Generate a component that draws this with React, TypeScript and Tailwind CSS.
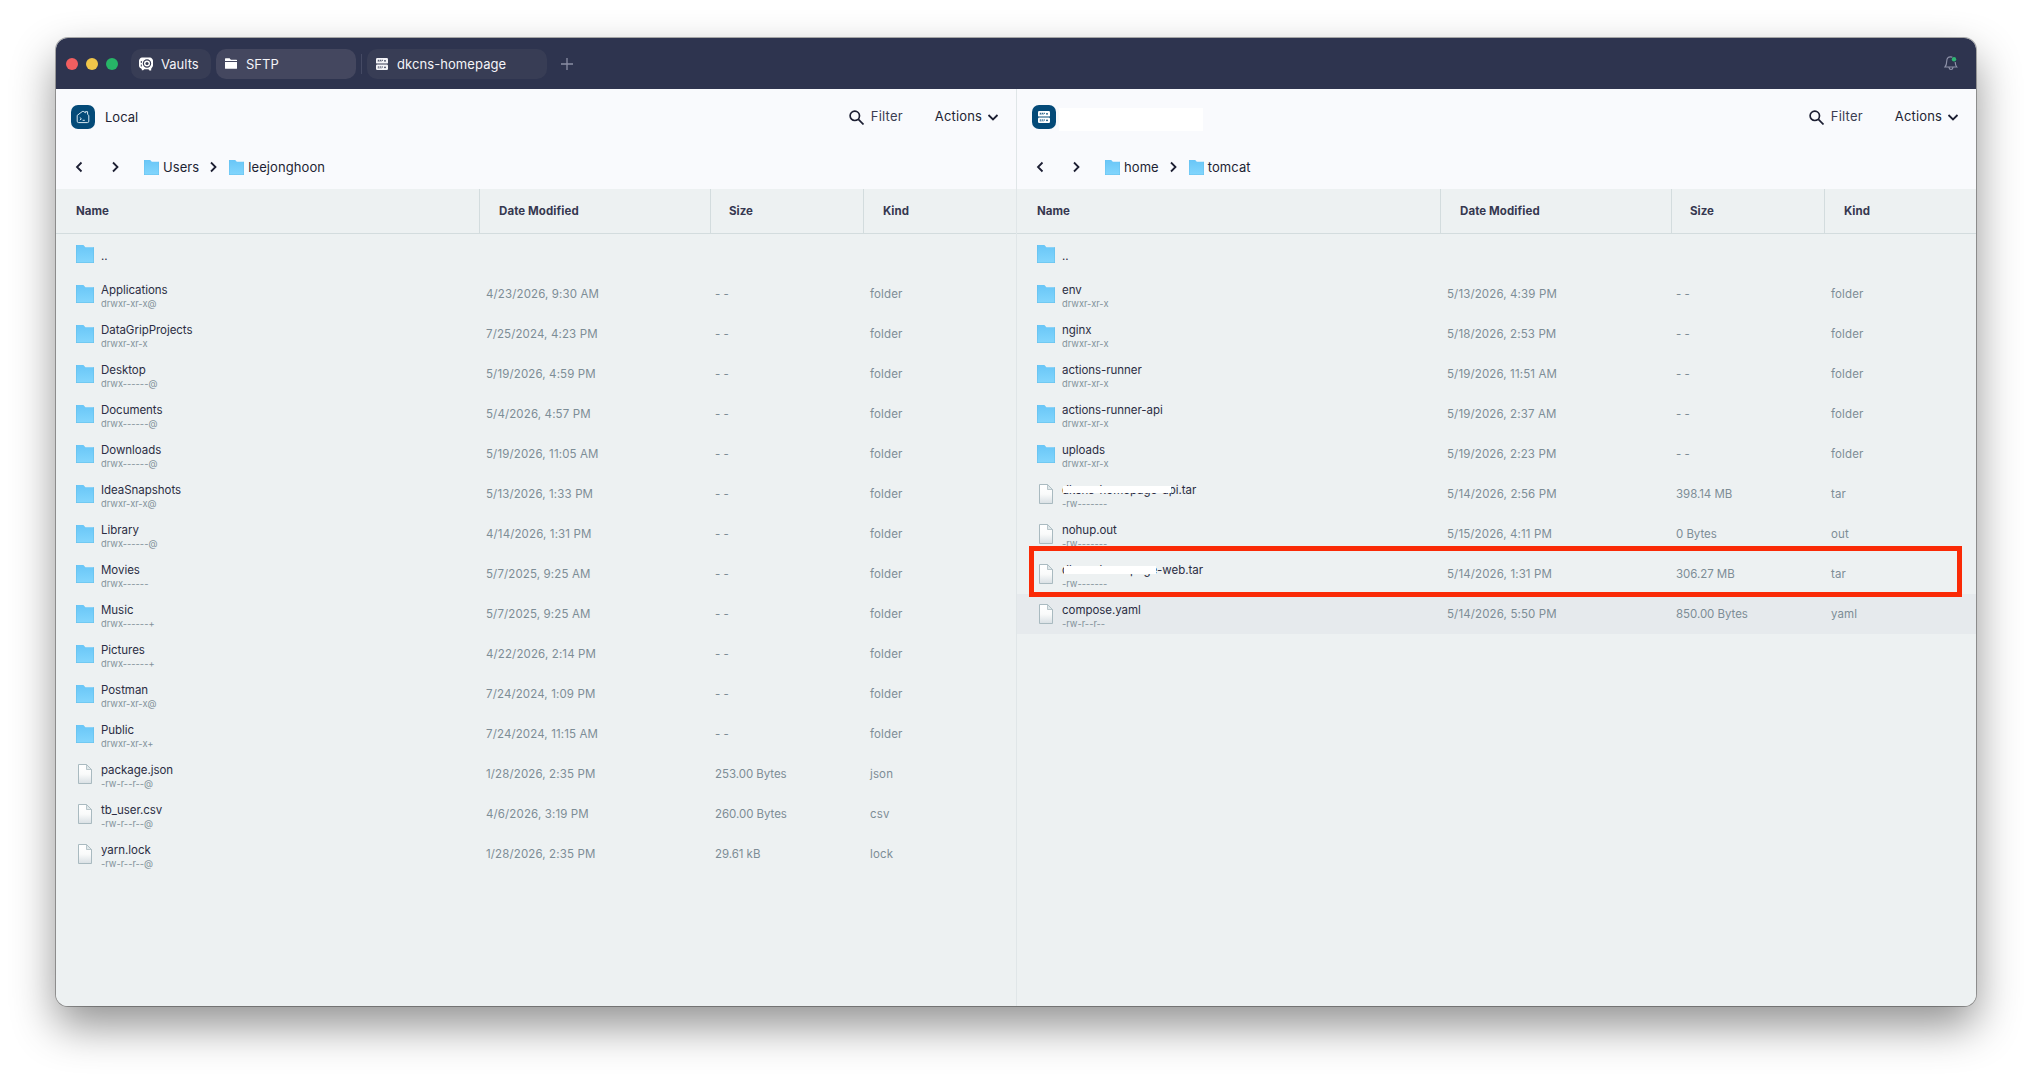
import { ReactNode } from 'react'
import clsx from 'clsx'

interface FileEntry {
  name: string
  perms?: string
  date?: string
  size?: string
  kind?: string
  selected?: boolean
  mask?: 'api' | 'web'
}

const localFiles: FileEntry[] = [
  { name: '..' },
  { name: 'Applications', perms: 'drwxr-xr-x@', date: '4/23/2026, 9:30 AM', size: '- -', kind: 'folder' },
  { name: 'DataGripProjects', perms: 'drwxr-xr-x', date: '7/25/2024, 4:23 PM', size: '- -', kind: 'folder' },
  { name: 'Desktop', perms: 'drwx------@', date: '5/19/2026, 4:59 PM', size: '- -', kind: 'folder' },
  { name: 'Documents', perms: 'drwx------@', date: '5/4/2026, 4:57 PM', size: '- -', kind: 'folder' },
  { name: 'Downloads', perms: 'drwx------@', date: '5/19/2026, 11:05 AM', size: '- -', kind: 'folder' },
  { name: 'IdeaSnapshots', perms: 'drwxr-xr-x@', date: '5/13/2026, 1:33 PM', size: '- -', kind: 'folder' },
  { name: 'Library', perms: 'drwx------@', date: '4/14/2026, 1:31 PM', size: '- -', kind: 'folder' },
  { name: 'Movies', perms: 'drwx------', date: '5/7/2025, 9:25 AM', size: '- -', kind: 'folder' },
  { name: 'Music', perms: 'drwx------+', date: '5/7/2025, 9:25 AM', size: '- -', kind: 'folder' },
  { name: 'Pictures', perms: 'drwx------+', date: '4/22/2026, 2:14 PM', size: '- -', kind: 'folder' },
  { name: 'Postman', perms: 'drwxr-xr-x@', date: '7/24/2024, 1:09 PM', size: '- -', kind: 'folder' },
  { name: 'Public', perms: 'drwxr-xr-x+', date: '7/24/2024, 11:15 AM', size: '- -', kind: 'folder' },
  { name: 'package.json', perms: '-rw-r--r--@', date: '1/28/2026, 2:35 PM', size: '253.00 Bytes', kind: 'json' },
  { name: 'tb_user.csv', perms: '-rw-r--r--@', date: '4/6/2026, 3:19 PM', size: '260.00 Bytes', kind: 'csv' },
  { name: 'yarn.lock', perms: '-rw-r--r--@', date: '1/28/2026, 2:35 PM', size: '29.61 kB', kind: 'lock' },
]

const remoteFiles: FileEntry[] = [
  { name: '..' },
  { name: 'env', perms: 'drwxr-xr-x', date: '5/13/2026, 4:39 PM', size: '- -', kind: 'folder' },
  { name: 'nginx', perms: 'drwxr-xr-x', date: '5/18/2026, 2:53 PM', size: '- -', kind: 'folder' },
  { name: 'actions-runner', perms: 'drwxr-xr-x', date: '5/19/2026, 11:51 AM', size: '- -', kind: 'folder' },
  { name: 'actions-runner-api', perms: 'drwxr-xr-x', date: '5/19/2026, 2:37 AM', size: '- -', kind: 'folder' },
  { name: 'uploads', perms: 'drwxr-xr-x', date: '5/19/2026, 2:23 PM', size: '- -', kind: 'folder' },
  { name: 'dkcns-homepage-api.tar', perms: '-rw-------', date: '5/14/2026, 2:56 PM', size: '398.14 MB', kind: 'tar', mask: 'api' },
  { name: 'nohup.out', perms: '-rw-------', date: '5/15/2026, 4:11 PM', size: '0 Bytes', kind: 'out' },
  { name: 'dkcns-homepage-web.tar', perms: '-rw-------', date: '5/14/2026, 1:31 PM', size: '306.27 MB', kind: 'tar', mask: 'web' },
  { name: 'compose.yaml', perms: '-rw-r--r--', date: '5/14/2026, 5:50 PM', size: '850.00 Bytes', kind: 'yaml', selected: true },
]

function FolderIcon({ className }: { className: string }) {
  return (
    <svg viewBox="0 0 18 18" className={clsx('shrink-0', className)}>
      <defs>
        <linearGradient id="folder" x1="0" y1="0" x2="0" y2="1">
          <stop offset="0" stopColor="#69c6f7" />
          <stop offset="1" stopColor="#83d6fd" />
        </linearGradient>
      </defs>
      <path d="M0 0h7.4l2 2.2H18V18H0z" fill="url(#folder)" />
      <path d="M0 17.6h18M.3 0v18M17.7 2.2V18" stroke="#62bdea" strokeWidth=".6" />
    </svg>
  )
}

function FileIcon() {
  return (
    <svg viewBox="0 0 18 20" className="w-[18px] h-5 shrink-0">
      <defs>
        <linearGradient id="file" x1="0" y1="0" x2="0" y2="1">
          <stop offset="0" stopColor="#ffffff" />
          <stop offset=".5" stopColor="#fafbfb" />
          <stop offset="1" stopColor="#d9e0e4" />
        </linearGradient>
      </defs>
      <path d="M2.5.5h8l5 5v14h-13z" fill="url(#file)" stroke="#a9bac0" />
      <path d="M10.5.5v5h5z" fill="#dfe8ea" stroke="#a9bac0" strokeWidth=".8" />
    </svg>
  )
}

function ServerIcon({ className, hole }: { className: string; hole: string }) {
  return (
    <svg viewBox="0 0 12 12" className={className}>
      <rect width="12" height="5.6" rx="1.2" fill="currentColor" />
      <rect y="6.4" width="12" height="5.6" rx="1.2" fill="currentColor" />
      <path d="M1.8 2.3h5.4M1.8 9h5.4" stroke={hole} strokeWidth="1" strokeDasharray="1.3 .6" />
      <path d="M1.8 3.4h4M1.8 10.1h4" stroke={hole} strokeWidth=".8" strokeDasharray=".8 1" />
      <circle cx="9" cy="2.8" r=".9" fill={hole} />
      <circle cx="9" cy="9.3" r=".9" fill={hole} />
    </svg>
  )
}

function VaultIcon() {
  return (
    <svg viewBox="0 0 14 14" className="w-3.5 h-3.5" fill="none">
      <path
        d="M3 .4h8q1.200 0 1.900 1l.6.9q.5.7.5 1.500v4.400q0 1-.6 1.900l-1.200 1.600v1.800h-1.800l-.9-1.200H5.200l-1 .9H2.800v-1.300L.9 10.700Q0 9.900 0 8.800V4q0-.9.5-1.700l.7-1Q1.800.4 3 .4z"
        fill="#fff"
      />
      <circle cx="8" cy="6.5" r="3.6" stroke="#383d55" strokeWidth="1.2" />
      <circle cx="8" cy="6.5" r="1.6" fill="#383d55" />
      <path d="M2.300 4v2M2.300 7.500v2" stroke="#383d55" />
    </svg>
  )
}

function HouseIcon() {
  return (
    <svg viewBox="0 0 14 14" className="w-3.5 h-3.5" fill="none" stroke="#d8e8f2" strokeWidth="1">
      <path d="M1.2 5.4 6.2 1.600q.8-.6 1.600 0l1.600 1.200V1.700h2.200v2.700l1.200 1V11.200q0 1.400-1.400 1.400H2.600q-1.400 0-1.400-1.400z" />
      <path d="m3.8 7.5 1.6 1.3-1.6 1.3M6.6 10.3h2.2" />
    </svg>
  )
}

function Chevron({ d, className }: { d: string; className?: string }) {
  return (
    <svg viewBox="0 0 12 12" className={clsx('w-3 h-3 shrink-0', className)} fill="none" stroke="#1d1f33" strokeWidth="1.8">
      <path d={d} />
    </svg>
  )
}

const LEFT = 'M7.5 1.5 3 6l4.500 4.500'
const RIGHT = 'M3 1.5 7.5 6 3 10.5'
const DOWN = 'M1.5 4 6 8.5 10.5 4'

function TitleBar() {
  return (
    <div className="flex items-center h-[51px] pl-[10px] pr-[18px] bg-[#2e344f] text-[13px] text-[#f4f4f8]">
      <div className="flex gap-2">
        <div className="w-3 h-3 rounded-full bg-[#f15e60]" />
        <div className="w-3 h-3 rounded-full bg-[#f0c64a]" />
        <div className="w-3 h-3 rounded-full bg-[#27b567]" />
      </div>
      <div className="flex items-center w-20 h-[30px] ml-[13px] pl-2 rounded-[10px] bg-[#383d55]">
        <VaultIcon />
        <span className="ml-2 pt-0.5">Vaults</span>
      </div>
      <div className="flex items-center w-[140px] h-[30px] ml-[5px] pl-[9px] rounded-[10px] bg-[#44475f]">
        <svg viewBox="0 0 12 11" className="w-3 h-[11px]" fill="#fff">
          <path d="M.6.3h4l1.300 1.400h5.500q.6 0 .6.6v.8H0V.9Q0 .3.6.3zM0 4h12v6.200q0 .6-.6.6H.6q-.6 0-.6-.6z" />
        </svg>
        <span className="ml-[9px] pt-0.5">SFTP</span>
      </div>
      <div className="w-px h-5 ml-[5px] bg-[#454a64]" />
      <div className="flex items-center w-[180px] h-[30px] ml-[5px] pl-[9px] rounded-[10px] bg-[#383d55]">
        <ServerIcon className="w-3 h-3" hole="#383d55" />
        <span className="ml-[9px] pt-0.5 tracking-[0.08px]">dkcns-homepage</span>
      </div>
      <svg viewBox="0 0 12 12" className="w-3 h-3 ml-[14px]" stroke="#8a8ea5" strokeWidth="1.3">
        <path d="M6 0v12M0 6h12" />
      </svg>
      <svg viewBox="0 0 14 15" className="w-3.5 h-[15px] ml-auto" fill="none" stroke="#8d91a8" strokeWidth="1.2">
        <path d="M8.3 1.2Q2.8-.3 2.7 5.300 2.7 9 1 11h11.800Q11.2 9 11.2 6M5 11.500q.3 2 2 2t2-2" />
        <circle cx="10" cy="3.2" r="2.2" fill="#2fb574" stroke="none" />
      </svg>
    </div>
  )
}

function Toolbar({ icon, title, path }: { icon: ReactNode; title: ReactNode; path: string[] }) {
  return (
    <div className="h-[100px] bg-[#f9fafd] text-[13px] text-[#1d1f33]">
      <div className="flex items-center h-14 pl-[15px] pr-[17px]">
        <div className="flex items-center justify-center w-6 h-6 rounded-[7px] bg-[#044a78] text-white">{icon}</div>
        {title}
        <svg viewBox="0 0 15 15" className="w-[15px] h-[15px] ml-auto" fill="none" stroke="#1d1f33" strokeWidth="1.7">
          <circle cx="5.8" cy="5.8" r="4.7" />
          <path d="m9.2 9.2 5.300 5.300" />
        </svg>
        <span className="ml-[7px] tracking-[0.2px] text-[#3b3d52]">Filter</span>
        <span className="ml-8 tracking-[0.15px]">Actions</span>
        <Chevron d={DOWN} className="ml-[5px]" />
      </div>
      <div className="flex items-center h-11 pl-[18px]">
        <Chevron d={LEFT} />
        <Chevron d={RIGHT} className="ml-6" />
        {path.map((part, i) => (
          <div key={part} className="flex items-center">
            {i > 0 && <Chevron d={RIGHT} className="ml-[9px]" />}
            <FolderIcon className={i > 0 ? 'w-[15px] h-[15px] ml-[9px]' : 'w-[15px] h-[15px] ml-[22px]'} />
            <span className="ml-1 pt-px tracking-[0.08px]">{part}</span>
          </div>
        ))}
      </div>
    </div>
  )
}

function FileRow({ file }: { file: FileEntry }) {
  const isFile = file.kind && file.kind !== 'folder'
  return (
    <div className={clsx('flex items-center h-10 text-[11.5px] text-[#7d8d96]', file.selected && 'bg-[#e6eaed]')}>
      <div className="flex items-center w-[424px] pl-5">
        {isFile ? <FileIcon /> : <FolderIcon className="w-[18px] h-[18px]" />}
        <div className="relative h-10 ml-[7px] pt-[9px]">
          <div className={clsx('leading-[14px] tracking-[-0.04px] text-[#2b2d43]', !file.perms && 'pt-[6px]')}>{file.name}</div>
          {file.perms && <div className="text-[9.3px] leading-[13px] text-[#82919a]">{file.perms}</div>}
          {file.mask === 'api' && <div className="absolute left-px top-3 w-[108px] h-[7px] bg-white" />}
          {file.mask === 'web' && <div className="absolute left-0.5 top-3 w-[92px] h-2 bg-white" />}
        </div>
      </div>
      <div className="w-[230px] pt-0.5 pl-[6px] tracking-[0.13px]">{file.date}</div>
      <div className="w-[154px] pt-0.5 pl-[5px] tracking-[-0.05px]">{file.size}</div>
      <div className="pt-0.5 pl-[6px] tracking-[0.13px]">{file.kind}</div>
    </div>
  )
}

function FileTable({ files }: { files: FileEntry[] }) {
  return (
    <div>
      <div className="flex h-[45px] border-b border-[#d3dcde] text-[11.5px] font-bold text-[#363850]">
        <div className="flex items-center w-[423px] pt-0.5 pl-5">Name</div>
        <div className="flex items-center w-[231px] pt-0.5 pl-[19px] border-l border-[#d3dcde] tracking-[0.08px]">Date Modified</div>
        <div className="flex items-center w-[153px] pt-0.5 pl-[18px] border-l border-[#d3dcde]">Size</div>
        <div className="flex items-center pt-0.5 pl-[19px] border-l border-[#d3dcde]">Kind</div>
      </div>
      {files.map((file) => (
        <FileRow key={file.name} file={file} />
      ))}
    </div>
  )
}

export default function App() {
  return (
    <div className="w-[2032px] h-[1080px] pt-[38px] pl-14 overflow-hidden bg-white font-['Inter',sans-serif]">
      <div className="relative flex flex-col w-[1920px] h-[968px] rounded-xl shadow-[0_0_0_1px_rgba(0,0,0,0.3),0_20px_44px_rgba(0,0,0,0.43)]">
        <div className="flex flex-col flex-1 overflow-hidden rounded-xl bg-[#edf1f2]">
          <TitleBar />
          <div className="flex flex-1">
            {/* Local side */}
            <div className="w-[960px]">
              <Toolbar icon={<HouseIcon />} title={<span className="ml-[10px] pt-px">Local</span>} path={['Users', 'leejonghoon']} />
              <FileTable files={localFiles} />
            </div>
            {/* Remote side */}
            <div className="w-[960px] border-l border-[#e0e6e8]">
              <Toolbar
                icon={<ServerIcon className="w-3 h-3" hole="#044a78" />}
                title={<div className="w-36 h-[23px] mt-[5px] ml-[3px] bg-white" />}
                path={['home', 'tomcat']}
              />
              <FileTable files={remoteFiles} />
            </div>
          </div>
        </div>
        {/* Highlight over the web archive row */}
        <div className="absolute left-[973px] top-[508px] w-[933px] h-[51px] border-[5px] border-[#fa2a06]" />
      </div>
    </div>
  )
}
